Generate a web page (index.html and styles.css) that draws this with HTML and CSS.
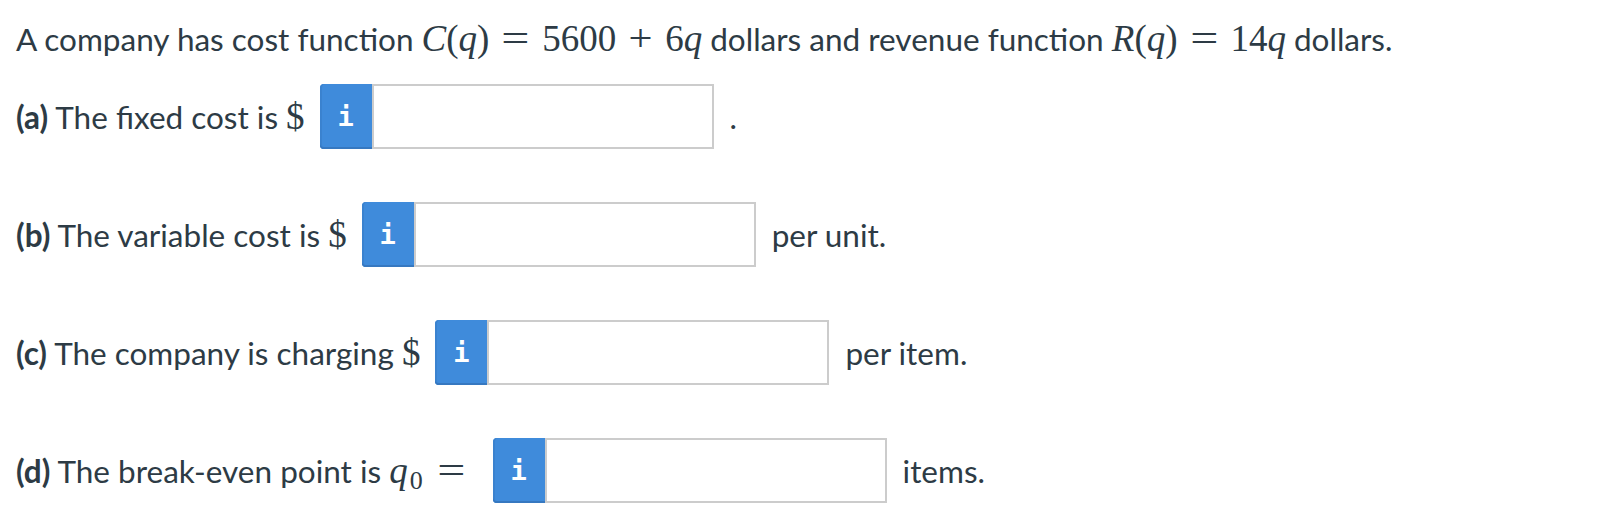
FILE: index.html
```html
<!DOCTYPE html>
<html lang="en">
<head>
<meta charset="utf-8">
<title>Cost and revenue</title>
<link rel="stylesheet" href="styles.css">
</head>
<body>
<div class="question">
  <p class="intro">A company has cost function <span class="math"><i>C</i>(<i>q</i>)<span class="rel">=</span>5600<span class="bin">+</span>6<i>q</i></span> dollars and revenue function <span class="math"><i>R</i>(<i>q</i>)<span class="rel">=</span>14<i>q</i></span> dollars.</p>
  <div class="parts">
    <div class="part">
      <span class="label"><b>(a)</b> The fixed cost is <span class="math">$</span></span>
      <span class="answer"><span class="info">i</span><span class="field"></span></span>
      <span class="after">.</span>
    </div>
    <div class="part">
      <span class="label"><b>(b)</b> The variable cost is <span class="math">$</span></span>
      <span class="answer"><span class="info">i</span><span class="field"></span></span>
      <span class="after">per unit.</span>
    </div>
    <div class="part">
      <span class="label"><b>(c)</b> The company is charging <span class="math">$</span></span>
      <span class="answer"><span class="info">i</span><span class="field"></span></span>
      <span class="after">per item.</span>
    </div>
    <div class="part">
      <span class="label"><b>(d)</b> The break-even point is <span class="math"><span class="sym"><i>q</i><sub>0</sub></span><span class="rel">=</span></span></span>
      <span class="answer"><span class="info">i</span><span class="field"></span></span>
      <span class="after">items.</span>
    </div>
  </div>
</div>
</body>
</html>
```
FILE: styles.css
```css
html, body {
  margin: 0;
  padding: 0;
  background: #ffffff;
}
body {
  font-family: Lato, "Open Sans", sans-serif;
  font-size: 31.5px;
  color: #2d3b45;
}
.question {
  padding: 18px 16px 0 16px;
}
.intro {
  margin: 0;
  line-height: 42px;
}
.math {
  font-family: "Liberation Serif", "DejaVu Serif", serif;
  font-size: 37px;
  color: #2d3b45;
}
.math i {
  font-style: italic;
}
.math .rel {
  display: inline-block;
  transform: scaleX(1.35);
  margin: 0 16px;
}
.math .bin {
  display: inline-block;
  transform: scaleX(1.15);
  margin: 0 14px;
}
.math .sym {
  margin-right: 2px;
}
.math sub {
  font-size: 26px;
  font-style: normal;
  margin-left: 2px;
  vertical-align: -6px;
  line-height: 0;
}
.parts {
  display: flex;
  flex-direction: column;
  gap: 53px;
  margin-top: 24px;
}
.part {
  display: flex;
  align-items: center;
  height: 65px;
}
.label b {
  font-weight: 700;
}
.answer {
  display: flex;
  height: 65px;
  margin-left: 15px;
  margin-right: 16px;
}
.info {
  width: 52px;
  background: #3f8bdb;
  border-radius: 4px 0 0 4px;
  box-shadow: inset 0 -2px 0 #3678c0, inset 2px 0 0 #3a82cf;
  color: #ffffff;
  font-family: "DejaVu Sans Mono", monospace;
  font-weight: 700;
  font-size: 27px;
  display: flex;
  align-items: center;
  justify-content: center;
}
.field {
  width: 338px;
  border: 2px solid #cccccc;
  background: #ffffff;
}
```
